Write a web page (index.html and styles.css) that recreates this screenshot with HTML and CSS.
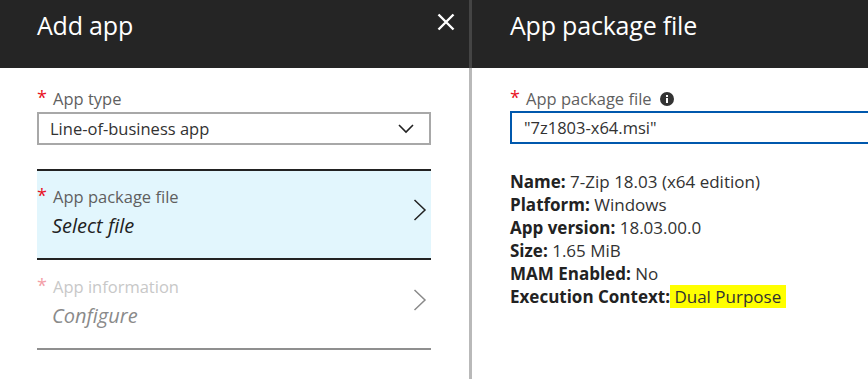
FILE: index.html
```html
<!DOCTYPE html>
<html>
<head>
<meta charset="utf-8">
<link rel="stylesheet" href="styles.css">
</head>
<body>
<div class="blades">
  <section class="blade blade-left">
    <header class="blade-header">
      <h1 class="blade-title">Add app</h1>
      <button class="close" aria-label="Close">
        <svg width="18" height="18" viewBox="0 0 18 18"><path d="M1.5 1.5 L16.5 16.5 M16.5 1.5 L1.5 16.5" stroke="#fff" stroke-width="2.4" fill="none"/></svg>
      </button>
    </header>
    <div class="blade-content">
      <div class="field">
        <div class="label"><span class="req">*</span>App type</div>
        <div class="select">
          <span>Line-of-business app</span>
          <svg class="caret" width="16" height="10" viewBox="0 0 16 10"><path d="M1 1 L8 8 L15 1" stroke="#222" stroke-width="1.6" fill="none"/></svg>
        </div>
      </div>
      <div class="step step-active">
        <div class="step-text">
          <div class="label"><span class="req">*</span>App package file</div>
          <div class="step-value">Select file</div>
        </div>
        <svg class="chev" width="14" height="22" viewBox="0 0 14 22"><path d="M1.5 1 L12 11 L1.5 21" stroke="#222" stroke-width="1.5" fill="none"/></svg>
      </div>
      <div class="step step-disabled">
        <div class="step-text">
          <div class="label"><span class="req">*</span>App information</div>
          <div class="step-value">Configure</div>
        </div>
        <svg class="chev" width="14" height="22" viewBox="0 0 14 22"><path d="M1.5 1 L12 11 L1.5 21" stroke="#8a8a8a" stroke-width="1.5" fill="none"/></svg>
      </div>
    </div>
  </section>
  <div class="splitter"></div>
  <section class="blade blade-right">
    <header class="blade-header">
      <h1 class="blade-title">App package file</h1>
    </header>
    <div class="blade-content right-content">
      <div class="field">
        <div class="label"><span class="req">*</span>App package file
          <svg class="info" width="14" height="14" viewBox="0 0 14 14"><circle cx="7" cy="7" r="7" fill="#333"/><rect x="6" y="6" width="2" height="5" fill="#fff"/><rect x="6" y="3" width="2" height="2" fill="#fff"/></svg>
        </div>
        <div class="input">"7z1803-x64.msi"</div>
      </div>
      <div class="details">
        <div class="row"><b>Name:</b> 7-Zip 18.03 (x64 edition)</div>
        <div class="row"><b>Platform:</b> Windows</div>
        <div class="row"><b>App version:</b> 18.03.00.0</div>
        <div class="row"><b>Size:</b> 1.65 MiB</div>
        <div class="row"><b>MAM Enabled:</b> No</div>
        <div class="row"><b>Execution Context:</b><span class="hl"> Dual Purpose</span></div>
      </div>
    </div>
  </section>
</div>
</body>
</html>
```

FILE: styles.css
```css
* { box-sizing: border-box; }
html, body { margin: 0; padding: 0; }
body {
  font-family: "Open Sans", "Noto Sans", sans-serif;
  background: #fff;
  color: #323232;
  overflow: hidden;
}
.blades {
  display: flex;
  width: 868px;
  height: 379px;
}
.blade { display: flex; flex-direction: column; }
.blade-left { width: 469px; flex: none; }
.blade-right { flex: 1; min-width: 0; overflow: hidden; }
.splitter {
  width: 3px;
  flex: none;
  background: linear-gradient(#444 0, #444 68px, #b9b9b9 68px);
}
.blade-header {
  height: 68px;
  background: #252525;
  display: flex;
  align-items: flex-start;
  justify-content: space-between;
  padding: 7px 14px 0 37px;
}
.blade-right .blade-header { padding-left: 38px; }
.blade-title {
  margin: 0;
  font-weight: 400;
  font-size: 25px;
  line-height: 36px;
  color: #fff;
  letter-spacing: -0.2px;
}
.close {
  background: none;
  border: 0;
  padding: 0;
  margin-top: 6px;
  width: 18px;
  height: 18px;
  display: flex;
}
.blade-content {
  padding: 21px 38px 0 37px;
  display: flex;
  flex-direction: column;
}
.label {
  position: relative;
  font-size: 16.5px;
  line-height: 20px;
  color: #5f5f5f;
  padding-left: 16px;
  display: flex;
  align-items: center;
  white-space: nowrap;
}
.req {
  position: absolute;
  left: 0;
  top: -1px;
  color: #e81123;
  font-size: 18px;
  line-height: 18px;
}
.select {
  margin-top: 3px;
  height: 33px;
  border: 2px solid #a8a8a8;
  display: flex;
  align-items: center;
  justify-content: space-between;
  padding: 0 15px 0 11px;
  font-size: 16.5px;
  color: #323232;
}
.step {
  display: flex;
  align-items: flex-start;
  justify-content: space-between;
  height: 89px;
  padding: 0 4px 0 0;
}
.step-active {
  margin-top: 24px;
  height: 91px;
  background: #e2f6fd;
  border-top: 2px solid #222;
  border-bottom: 2px solid #222;
}
.step-disabled {
  height: 90px;
  border-bottom: 2px solid #8f8f8f;
}
.step-text { padding-top: 16px; }
.step-disabled .step-text { padding-top: 17px; }
.step-value {
  margin-top: 4px;
  padding-left: 15px;
  font-style: italic;
  font-size: 20px;
  line-height: 30px;
  color: #222;
}
.chev { margin-top: 28px; }
.step-disabled .chev { margin-top: 29px; }
.step-disabled .label { color: #c8c8c8; }
.step-disabled .req { color: #f3a0a7; }
.step-disabled .step-value { color: #8a8a8a; }
.right-content { padding-left: 38px; padding-right: 0; }
.info { margin-left: 8px; flex: none; }
.input {
  margin-top: 2px;
  width: 420px;
  height: 33px;
  border: 2px solid #0058ad;
  padding: 0 12px;
  font-size: 16.5px;
  line-height: 29px;
  color: #323232;
  white-space: nowrap;
}
.details {
  margin-top: 26px;
  font-size: 17px;
  line-height: 23px;
  color: #323232;
}
.row { white-space: pre; }
.row b { font-weight: 700; color: #222; }
.hl { background: #ffff00; padding-right: 5px; }
```
